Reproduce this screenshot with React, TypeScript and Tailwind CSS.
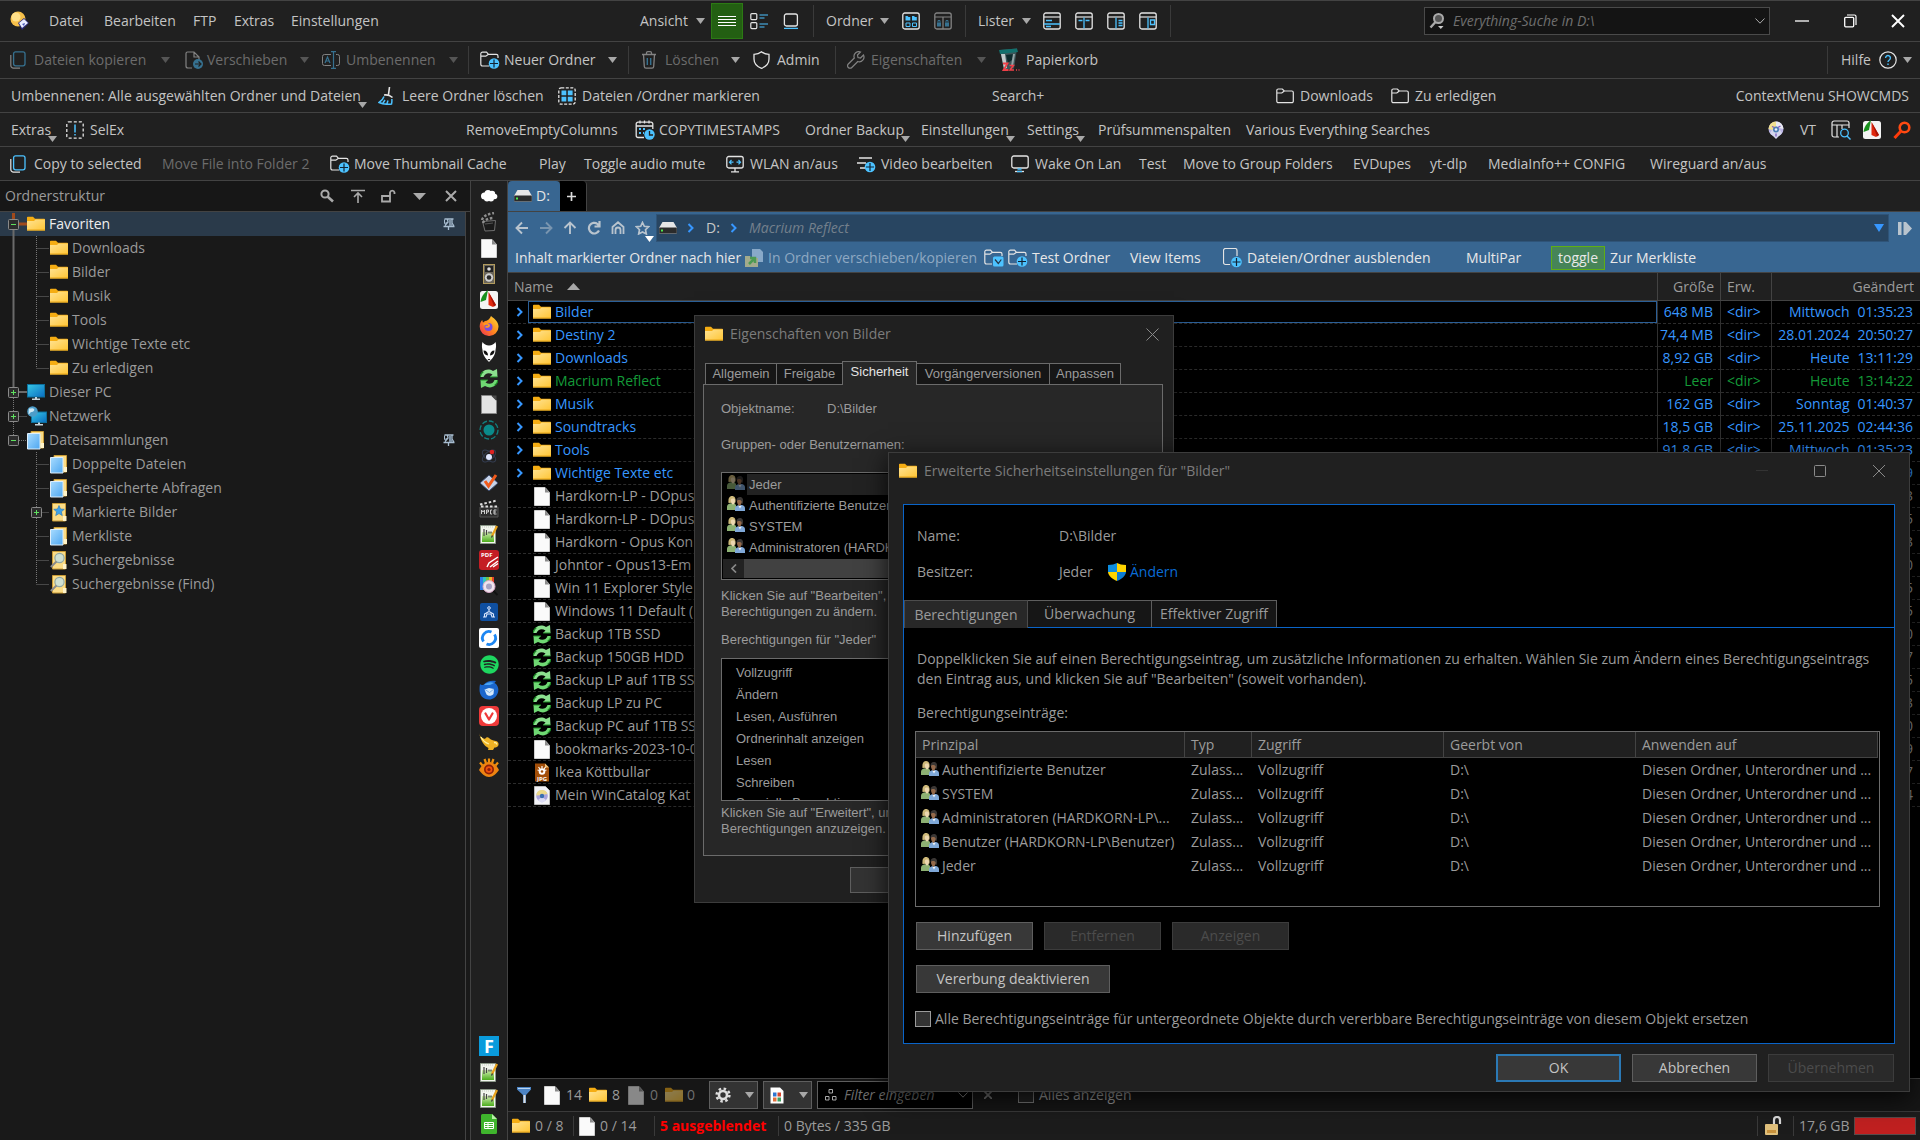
import type { ReactNode } from "react";
import clsx from "clsx";
import { FaSpotify } from "react-icons/fa";
import { SiVivaldi } from "react-icons/si";

const W = "#e4e4e4";
const B = "#4cc2ff";

type IcoProps = { children: ReactNode; w?: number; h?: number; dim?: boolean };

function Ico({ children, w = 18, h = 18, dim }: IcoProps) {
  return (
    <svg
      width={w}
      height={h}
      viewBox={`0 0 ${w} ${h}`}
      fill="none"
      aria-hidden="true"
      className={clsx("shrink-0", dim && "opacity-50")}
    >
      {children}
    </svg>
  );
}

/* ---------- toolbar icons ---------- */

const LogoIcon = () => (
  <Ico w={20} h={20}>
    <circle cx="8" cy="8" r="7.5" fill="#f6c04a" />
    <circle cx="6" cy="6" r="4.5" fill="#ffe08a" />
    <path d="M8 12l6-5 5 5-7 7z" fill="#2a2a7a" />
    <path d="M9 12l5-4 4 4-6 5z" fill="#e8ecff" />
    <path d="M12 13l3-1-1 3z" fill="#4858b8" />
  </Ico>
);

const CopyIcon = ({ dim }: { dim?: boolean }) => (
  <Ico w={16} dim={dim}>
    <path d="M.8 4v10.5a2.6 2.6 0 0 0 2.6 2.6H10" stroke={W} strokeWidth="1.2" />
    <rect x="3.6" y=".8" width="11.4" height="14" rx="2" stroke={B} strokeWidth="1.3" />
  </Ico>
);

const MoveIcon = () => (
  <Ico dim>
    <path d="M1 15V2.5A1.5 1.5 0 0 1 2.5 1H9l5 5v3M9 1v5h5M1 15a2 2 0 0 0 2 2h4" stroke={W} strokeWidth="1.2" />
    <circle cx="13" cy="13" r="5" fill={B} />
    <path d="M10 13h6M13.5 10.5L16 13l-2.5 2.5" stroke="#202020" strokeWidth="1.2" />
  </Ico>
);

const RenameIcon = () => (
  <Ico dim>
    <path d="M9 3.5H2.5a2 2 0 0 0-2 2v7a2 2 0 0 0 2 2H9M14 3.5h1.5a2 2 0 0 1 2 2v7a2 2 0 0 1-2 2H14" stroke={W} />
    <path d="M3 12l2.500-6L8 12M4 10h3M11.500 1v16M9 .7h5M9 17.300h5" stroke={B} strokeWidth="1.2" />
  </Ico>
);

const Plus = ({ x, y }: { x: number; y: number }) => (
  <g transform={`translate(${x} ${y})`}>
    <circle r="5.3" fill={B} />
    <path d="M-4 0h8M0-4v8" stroke="#123" strokeWidth="1.2" />
  </g>
);

const NewFolderIcon = () => (
  <Ico w={20}>
    <path d="M9 15H2.500a1.700 1.700 0 0 1-1.700-1.700V2.800a1.700 1.700 0 0 1 1.700-1.700h4l2 2.200h7.800A1.700 1.700 0 0 1 18 5v2M.8 5.200h5L8.500 3.300" stroke={W} strokeWidth="1.2" />
    <Plus x={14} y={12.5} />
  </Ico>
);

const CheckFolderIcon = () => (
  <Ico w={20}>
    <path d="M8 15H2.500a1.700 1.700 0 0 1-1.700-1.700V2.800a1.700 1.700 0 0 1 1.700-1.700h4l2 2.200h7.800A1.700 1.700 0 0 1 18 5v2M.8 5.200h5L8.500 3.300" stroke={W} strokeWidth="1.2" />
    <rect x="9" y="7.5" width="10.5" height="10" rx="1.5" fill={B} />
    <path d="M11 10.500l3.300 4 3-4" stroke="#234" strokeWidth="1.2" />
  </Ico>
);

const FolderLineIcon = () => (
  <Ico>
    <path d="M.8 3.500a1.500 1.500 0 0 1 1.500-1.500h4l2 2h7.500a1.500 1.500 0 0 1 1.500 1.500v8.700a1.500 1.500 0 0 1-1.500 1.500H2.300a1.500 1.500 0 0 1-1.500-1.500zM.8 6h5l2.500-2" stroke={W} strokeWidth="1.2" />
  </Ico>
);

const TrashIcon = () => (
  <Ico w={16} dim>
    <path d="M1 3.500h14M5.500 3.500V2A1.300 1.300 0 0 1 6.800.7h2.400A1.300 1.300 0 0 1 10.500 2v1.500M2.500 3.500l.8 12a1.700 1.700 0 0 0 1.700 1.600h6a1.700 1.700 0 0 0 1.700-1.600l.8-12" stroke={W} strokeWidth="1.3" />
    <path d="M6.300 7v7M9.700 7v7" stroke={B} strokeWidth="1.4" />
  </Ico>
);

const ShieldIcon = () => (
  <Ico w={17}>
    <path d="M8.500.8C6.500 2.500 4 3.300 1 3.300V8c0 5 3.500 7.800 7.500 9.300C12.500 15.800 16 13 16 8V3.300c-3 0-5.500-.8-7.500-2.500z" stroke={W} strokeWidth="1.3" />
  </Ico>
);

const WrenchIcon = () => (
  <Ico dim>
    <path d="M16.500 4l-3 3-2.500-.5L10.500 4l3-3a4.700 4.700 0 0 0-6.200 6L1.300 13a2.400 2.400 0 0 0 3.500 3.500l6-6a4.700 4.700 0 0 0 5.700-6.500z" stroke={W} strokeWidth="1.2" />
  </Ico>
);

const BinIcon = () => (
  <Ico w={22} h={24}>
    <path d="M2 2l17-1.500-3 20L6 22z" fill="#3d5558" />
    <path d="M1 2l18-1.500 1 3.500L2 6z" fill="#12706d" />
    <path d="M3 6l3 15 3-1-2-14z" fill="#c3cccd" />
    <path d="M8 7l8-1-2 6-4 3z" fill="#0d2a2c" />
    <path d="M15 6h2l-2 12h-2z" fill="#93a3a5" />
    <path d="M5 15.500h4.500L5.500 22h5" stroke="#f04048" strokeWidth="1.800" />
    <path d="M11.500 17.500h4l-3.500 4.500h4M18 22h1M20.500 22h1" stroke="#f04048" strokeWidth="1.500" />
  </Ico>
);

const HelpIcon = () => (
  <Ico>
    <circle cx="9" cy="9" r="8.200" stroke={W} strokeWidth="1.2" />
    <path d="M6.600 7a2.400 2.400 0 1 1 3.700 2c-.9.600-1.300 1-1.300 2M9 12.600v1.500" stroke={B} strokeWidth="1.4" />
  </Ico>
);

const BroomIcon = () => (
  <Ico>
    <path d="M11.500 0l-1 7.500M6 8c3-.5 6 .3 8.500 2.500" stroke={W} strokeWidth="1.6" />
    <path d="M6 9.500c-1 3-2.500 4.500-5 6 4 1.800 9 2 12.500 1.500.5-2 .5-3.500.3-5M5 16l2-3M9 16.500l1-3" stroke={B} strokeWidth="1.5" />
  </Ico>
);

const SelectIcon = () => (
  <Ico>
    <rect x=".8" y=".8" width="16.400" height="16.400" rx="2.500" stroke={W} strokeWidth="1.3" strokeDasharray="3 1.500" />
    <path d="M3.500 3.500h4.800v4.800H3.500zM9.800 3.500h4.800v4.800H9.800zM3.500 9.800h4.800v4.800H3.500zM9.800 9.800h4.800v4.800H9.800z" fill={B} />
  </Ico>
);

const SelExIcon = () => (
  <Ico>
    <rect x=".8" y=".8" width="16.400" height="16.400" rx="2" stroke={W} strokeWidth="1.3" strokeDasharray="3 2" />
    <path d="M9 3.500v8M9 13v1.500" stroke={B} strokeWidth="1.5" />
  </Ico>
);

const CalendarIcon = () => (
  <Ico w={20} h={20}>
    <path d="M9 17.500H3A1.800 1.800 0 0 1 1.200 15.700V4A1.800 1.800 0 0 1 3 2.200h13A1.800 1.800 0 0 1 17.800 4v5M1.200 6h16.600M5 .5v3M9.500.5v3M14 .5v3" stroke={W} strokeWidth="1.3" />
    <path d="M4 9h2M8 9h2M4 13h2M8 13h1" stroke={B} strokeWidth="2" />
    <circle cx="14.500" cy="14.500" r="5.200" fill={B} />
    <path d="M14.500 11v4h3.500" stroke="#202020" strokeWidth="1.3" />
  </Ico>
);

const WlanIcon = () => (
  <Ico>
    <rect x=".8" y="1.500" width="16.400" height="11.500" rx="2" stroke={W} strokeWidth="1.3" />
    <path d="M9 13v3.500M5 16.800h8" stroke={W} strokeWidth="1.3" />
    <path d="M3.500 7.200h4M5.500 5l-2 2.200 2 2.200M14.500 7.200h-4M12.500 5l2 2.200-2 2.200" stroke={B} strokeWidth="1.2" />
  </Ico>
);

const VideoIcon = () => (
  <Ico w={20}>
    <path d="M2 3h13M0 8h9M3 13h5" stroke={W} strokeWidth="1.4" />
    <Plus x={13} y={12} />
  </Ico>
);

const MonitorIcon = () => (
  <Ico>
    <rect x=".8" y="1" width="16.400" height="12" rx="2" stroke={W} strokeWidth="1.3" />
    <path d="M4 16.500h9" stroke={W} strokeWidth="1.3" />
    <path d="M6.500 14h4M6 16.500h5" stroke={B} strokeWidth="1.3" />
  </Ico>
);

const LinesIcon = () => (
  <Ico>
    <path d="M0 4.500h18M0 7.500h18M0 10.500h18M0 13.500h18" stroke="#fff" />
  </Ico>
);

const DetailsIcon = () => (
  <Ico>
    <rect x=".8" y="1.600" width="6" height="6" rx="1" stroke={W} strokeWidth="1.2" />
    <rect x=".8" y="10.600" width="6" height="6" rx="1" stroke={W} strokeWidth="1.2" />
    <path d="M9.500 3H18M9.500 6h5M9.500 12H18M9.500 15h5" stroke={B} strokeWidth="1.2" />
  </Ico>
);

const ThumbIcon = () => (
  <Ico w={16}>
    <rect x="1.400" y="2" width="13" height="12" rx="2" stroke={W} strokeWidth="1.3" />
    <path d="M1 16.400h14" stroke={B} strokeWidth="1.3" />
  </Ico>
);

const FoldersIcon = () => (
  <Ico>
    <rect x=".8" y="1" width="16.400" height="16" rx="2" stroke={W} strokeWidth="1.3" />
    <path d="M3.500 4h2l1 1h1.800v3.500H3.500zM10 4h2l1 1h1.800v3.500H10z" fill={B} />
    <path d="M4 11h4v3.500H4zM10.500 11h4v3.500h-4z" stroke={B} />
  </Ico>
);

const LockFoldersIcon = () => (
  <Ico dim>
    <rect x=".8" y="1" width="16.400" height="16" rx="2" stroke={W} strokeWidth="1.3" />
    <path d="M1 5h16M9 5v12" stroke={W} strokeWidth="1.2" />
    <path d="M3 10.500h4v4H3zM11 10.500h4v4h-4z" fill={B} />
    <path d="M4 10.500V8.500h2v2M12 10.500V8.500h2v2" stroke={B} />
  </Ico>
);

const Frame = ({ blue, white }: { blue: string; white: string }) => (
  <Ico>
    <rect x=".8" y="1" width="16.400" height="16" rx="2" stroke={W} strokeWidth="1.3" />
    <path d={white} stroke={W} strokeWidth="1.2" />
    <path d={blue} stroke={B} strokeWidth="1.3" />
  </Ico>
);

const CatalogIcon = () => (
  <Ico>
    <circle cx="9" cy="8" r="7.500" fill="#b9b3e2" />
    <path d="M1.500 8A7.500 7.500 0 0 1 9 .5V6L5 9z" fill="#f0df8e" />
    <path d="M9 .5A7.500 7.500 0 0 1 16.500 8L12 7 9 5z" fill="#e9e9f2" />
    <path d="M3 12l6 6 6-6-2-3H5z" fill="#d5d6ee" />
    <circle cx="9" cy="8.500" r="3" fill="#4c7fb5" />
    <circle cx="9" cy="8.500" r="1.300" fill="#eef" />
    <path d="M5 5.500l2.500 1M13.500 5L11 6.500M9 12.500v3" stroke="#7d5bc2" strokeWidth="1.300" />
  </Ico>
);

const ColumnsSearchIcon = () => (
  <Ico w={20} h={20}>
    <path d="M8 17H3a2 2 0 0 1-2-2V3a2 2 0 0 1 2-2h13a2 2 0 0 1 2 2v5M1 5h17M6 5v12M11 5v4" stroke={W} strokeWidth="1.2" />
    <circle cx="13.500" cy="13" r="3.800" stroke={B} strokeWidth="1.3" />
    <path d="M16 16l3.500 3.500" stroke={B} strokeWidth="1.4" />
  </Ico>
);

const FastStoneIcon = () => (
  <Ico h={20}>
    <rect y="1" width="18" height="18" rx="2.500" fill="#f4f4f4" />
    <path d="M8 0C4 3 1 7 .5 12L6 10z" fill="#18901c" />
    <path d="M8.500 2L16 15l-3 2-4.500-2z" fill="#e0280e" />
    <path d="M8.500 2L16 15l-2 1.500z" fill="#a81206" />
  </Ico>
);

const RedSearchIcon = () => (
  <Ico>
    <circle cx="11.500" cy="6.500" r="4.800" stroke="#ff4a12" strokeWidth="2.600" />
    <path d="M8 10l-6.500 7" stroke="#ff3a0a" strokeWidth="3" />
  </Ico>
);

const EverythingIcon = () => (
  <Ico>
    <circle cx="9.500" cy="6.500" r="4.500" stroke="#aaa" strokeWidth="2" fill="#555" />
    <path d="M6.500 10L1.500 15.500" stroke="#aaa" strokeWidth="2.400" />
    <path d="M9 14h5.500l-2.700 3z" fill="#ccc" />
  </Ico>
);

/* ---------- file icons ---------- */

const FolderIcon = ({ dim }: { dim?: boolean }) => (
  <Ico h={16} dim={dim}>
    <path d="M0 1.500A.8.8 0 0 1 .8.700H6l2 2h9.200a.8.8 0 0 1 .8.800V14H0z" fill="#f5ad13" />
    <path d="M0 5h7l1.500-1.500H18V14.500H0z" fill="url(#folder)" />
    <path d="M0 14h18" stroke="#e8a516" />
  </Ico>
);

const PageIcon = ({ dim }: { dim?: boolean }) => (
  <Ico w={16} h={19} dim={dim}>
    <path d="M.5.500h10.500l4.500 5v13H.5z" fill="#fafafa" stroke="#cfcfcf" />
    <path d="M11 .5v5h4.500z" fill="#8c8c8c" />
  </Ico>
);

const SyncIcon = () => (
  <Ico h={19}>
    <path d="M0 8C1 2 7-1.500 13 2L17 0l.5 8H10l2.500-2.500C9 3 5 4 3.500 8z" fill="#8be08e" />
    <path d="M18 11c-1 6-7 9.500-13 6L1 19l-.5-8H8l-2.500 2.500C9 16 13 15 14.500 11z" fill="#6fd873" />
    <path d="M0 8c.4-2.400 1.600-4 3.300-5.200M18 11c-.4 2.400-1.600 4-3.300 5.200M10 8h7.500M.5 11H8" stroke="#1c8a25" strokeWidth="1.2" />
  </Ico>
);

const JpgIcon = () => (
  <Ico w={14} h={19}>
    <path d="M0 .5h10l4 4v14H0z" fill="#a24e08" />
    <path d="M10 .5v4h4z" fill="#f0c27a" />
    <circle cx="7" cy="8.500" r="3.300" fill="#fff" />
    <circle cx="7" cy="8.500" r="1.300" fill="#a24e08" />
    <path d="M2.500 7l2 .5M3.500 4l1.500 2M7 3v2.500M10.500 4L9 6M11.500 7l-2 .5" stroke="#fff" strokeWidth="1.2" />
    <text x="7" y="17.500" textAnchor="middle" fontSize="6" fontWeight="bold" fill="#fff">JPG</text>
  </Ico>
);

const CatalogFileIcon = () => (
  <Ico w={16} h={19}>
    <path d="M.5.500h11l4 4v14H.5z" fill="#f2f2f6" stroke="#bbb" />
    <circle cx="8" cy="10" r="5.800" fill="#a9a4dd" />
    <path d="M2.200 9.500A5.800 5.800 0 0 1 13.500 8L8 9z" fill="#ecd98a" />
    <path d="M4 14l4-3 4 3-4 3z" fill="#dcdcf4" />
    <circle cx="8" cy="10" r="2.200" fill="#3a6fb0" />
  </Ico>
);

const PcIcon = () => (
  <Ico h={16}>
    <rect x=".5" y=".5" width="17" height="12.500" fill="url(#screen)" stroke="#0d6f9c" />
    <path d="M8 13h2v1.500h3V16H5v-1.500h3z" fill="#c5d3da" />
  </Ico>
);

const NetworkIcon = () => (
  <Ico h={20} w={20}>
    <rect x="4.500" y="6" width="15" height="10.500" fill="url(#screen)" stroke="#0d6f9c" />
    <path d="M11 16.500h2V18h3v1.500H8V18h3z" fill="#c5d3da" />
    <circle cx="5.500" cy="5.500" r="5.300" fill="#4d9dc9" />
    <path d="M2 2.500c2 0 4-1 5 .5s-1 3-2.500 3S3 8.500 1.500 8z" fill="#cfeaf6" />
  </Ico>
);

const CollectionIcon = () => (
  <Ico h={19}>
    <path d="M4 .5h12.500V17H4z" fill="#fbdc86" stroke="#c99b36" />
    <path d="M14 12h3v5h-3z" fill="#fff3c9" />
    <path d="M.5 2.500h12.500v15.500H.5z" fill="url(#sheet)" stroke="#dfeefa" />
  </Ico>
);

const StarCollectionIcon = () => (
  <Ico h={19}>
    <path d="M2.500.5h13V18h-13z" fill="#fbdc86" stroke="#c99b36" />
    <path d="M9 2.500l1.500 3.500 3.800.3-2.900 2.500.9 3.800L9 10.600l-3.300 2 .9-3.800-2.900-2.500 3.800-.3z" fill="#3fa2e8" stroke="#2673b4" strokeWidth=".6" />
    <path d="M13 13h3.500v5H13z" fill="#fff3c9" />
  </Ico>
);

const SearchCollectionIcon = () => (
  <Ico h={19}>
    <path d="M2.500.5h13V18h-13z" fill="#fbdc86" stroke="#c99b36" />
    <circle cx="9.500" cy="7" r="4.600" fill="#cfe0d2" stroke="#8fa8a6" strokeWidth="1.2" />
    <path d="M6.500 10.500L.8 16" stroke="#8a8a8a" strokeWidth="2" />
    <path d="M13 13h3.500v5H13z" fill="#fff3c9" />
  </Ico>
);

const UsersIcon = ({ dim }: { dim?: boolean }) => (
  <span className="shrink-0 pb-1">
    <Ico h={15} dim={dim}>
      <path d="M0 14V11c0-2 1-3 3-3.500l4-.5 2 2v5z" fill="#8db173" />
      <path d="M1.500 7C1 2 2.500 0 5 0s4 2 3.500 6.500z" fill="#cdb878" />
      <path d="M4 3.500C4.500 2 8 2 8 4.500S7 8.500 6 8.500 3.500 6 4 3.500z" fill="#ecd7b0" />
      <path d="M8 15v-2.500c0-2 1.500-3 4-3.500h3c2 .5 3 1.500 3 3.500V15z" fill="#7fa8d8" />
      <path d="M9.500 5C9.500 2 11 1 13 1s3.500 1.500 3 5l-.5 2z" fill="#3b3735" />
      <path d="M10 5c0-1.500 4-1.500 4.500 0S13.500 10 12.500 10 10 7 10 5z" fill="#94694a" />
      <path d="M11.500 10l1.500 2.500L14.500 10z" fill="#eef3fa" />
    </Ico>
  </span>
);

const PinIcon = () => (
  <Ico w={12} h={12}>
    <path d="M1.500 1h9M4.500 1.500L5 4 2 7.500M9 1.500V5l2 3M.5 8.500h11M5.500 9v3" stroke="#a8bdd0" strokeWidth="1.300" />
    <path d="M6 2h2.500v3L10 8H6z" fill="#7f93a6" />
    <path d="M1.500 1.500v4l3-1" stroke="#a8bdd0" />
  </Ico>
);

const DriveIcon = () => (
  <Ico h={12}>
    <path d="M3.500 0h11L18 6H0z" fill="#e6e6e6" />
    <rect y="5.500" width="18" height="6" rx="1" fill="#2b2b2b" stroke="#8a8a8a" strokeWidth=".6" />
    <rect x="2" y="7.500" width="2" height="2" fill="#4dea4d" />
  </Ico>
);

/* ---------- launcher icons ---------- */

const NotesIcon = () => (
  <Ico h={20}>
    <path d="M.5 1.500h15v18H.5z" fill="#f2f6ee" stroke="#8d9a8a" />
    <path d="M2 8h12v10H2z" fill="url(#grass)" />
    <path d="M2 3h12" stroke="#c9cfc6" strokeDasharray="1 1" />
    <path d="M4 5v7M6.500 6v5M9 7.500v2M11 7.500v2" stroke="#444" strokeWidth="1.2" />
    <path d="M17 2l-5 10" stroke="#e8a21c" strokeWidth="2.200" />
    <path d="M12.500 11.500l-1 2" stroke="#333" strokeWidth="1.300" />
  </Ico>
);

const launchers: { name: string; icon: ReactNode }[] = [
  {
    name: "Cloud",
    icon: (
      <Ico>
        <g fill="#fff">
          <circle cx="4.500" cy="9" r="3.500" />
          <circle cx="8" cy="6.500" r="3.500" />
          <circle cx="12" cy="7" r="3.200" />
          <circle cx="14.500" cy="9.500" r="2.800" />
          <circle cx="11" cy="11.500" r="3" />
          <circle cx="7" cy="11.500" r="3" />
        </g>
      </Ico>
    ),
  },
  {
    name: "Clapper",
    icon: (
      <Ico h={20}>
        <path d="M2.500 9.500l13-1-1 10L5 19z" fill="#1a1a1a" stroke="#6f6f6f" />
        <path d="M2 8C3 4 8 2 14 1M3 11c1-3 6-5 11-5" stroke="#8f8f8f" strokeWidth="2.400" strokeDasharray="2.500 1.800" />
        <path d="M5 12l8-1" stroke="#555" />
      </Ico>
    ),
  },
  { name: "Dokument", icon: <PageIcon /> },
  {
    name: "Lautsprecher",
    icon: (
      <Ico w={12} h={20}>
        <rect x=".5" y=".5" width="11" height="19" fill="#6a655a" stroke="#b39c5e" />
        <rect x="2" y="2" width="8" height="6" fill="#222" />
        <circle cx="6" cy="5" r="1.800" fill="#ddd" />
        <circle cx="6" cy="13.500" r="4.200" fill="#cfcfcf" />
        <circle cx="6" cy="13.500" r="2.300" fill="#2b2b2b" />
      </Ico>
    ),
  },
  { name: "FastStone", icon: <FastStoneIcon /> },
  {
    name: "Firefox",
    icon: (
      <Ico h={20} w={20}>
        <path d="M10 20a9.200 9.200 0 0 1-9.300-9.500c0-3 1-5 2.500-6.500L4 6.500l2-1.500C8 5 11 3 12 0c4 3 7.500 6 7.500 10.500A9.300 9.300 0 0 1 10 20z" fill="url(#fox)" />
        <circle cx="9.500" cy="11" r="4" fill="#7a4be0" />
        <path d="M4.500 8.500c3-1.500 5.500-.5 5.500 1S8 11 6.500 10.500" stroke="#ff9a1e" strokeWidth="2" />
      </Ico>
    ),
  },
  {
    name: "foobar2000",
    icon: (
      <Ico w={16} h={20}>
        <path d="M1.500 0C3 2 5 3.500 8 3.500S13 2 14.500 0c1 3 .5 6 0 8 0 5-3.500 9-6.500 12-3-3-6.500-7-6.500-12C1 6 .5 3 1.500 0z" fill="#fff" />
        <path d="M2.500 8.500c3 0 4.500 2 4.500 5-3-.5-4.500-2-4.500-5zM13.500 8.500c-3 0-4.500 2-4.500 5 3-.5 4.500-2 4.500-5zM6.500 17h3L8 18.500z" fill="#111" />
      </Ico>
    ),
  },
  { name: "Backup", icon: <SyncIcon /> },
  {
    name: "LibreOffice",
    icon: (
      <Ico w={16} h={19}>
        <path d="M.5.500h10l5 5v13H.5z" fill="#e3e3e3" stroke="#888" />
        <path d="M10 .5h5.500V6z" fill="#4a4a4a" />
      </Ico>
    ),
  },
  {
    name: "Aufnahme",
    icon: (
      <Ico w={20} h={20}>
        <circle cx="10" cy="10" r="9" stroke="#128080" strokeWidth="1.300" strokeDasharray="5 2" />
        <circle cx="10" cy="10" r="5.500" fill="#0a8a8a" />
      </Ico>
    ),
  },
  {
    name: "Atom",
    icon: (
      <Ico>
        <ellipse cx="9" cy="9" rx="8" ry="4" stroke="#333c50" transform="rotate(40 9 9)" />
        <ellipse cx="9" cy="9" rx="8" ry="4" stroke="#333c50" transform="rotate(-40 9 9)" />
        <circle cx="9" cy="10" r="3" fill="#dfe6ff" />
        <circle cx="12" cy="5" r="2.300" fill="#d22" />
      </Ico>
    ),
  },
  {
    name: "Haken",
    icon: (
      <Ico w={20}>
        <path d="M10 2l9 8-9 8-9-8z" fill="#c7d3e8" stroke="#3d4b6b" />
        <path d="M6 8l3.500 5L17 2" stroke="#f05a1c" strokeWidth="3" />
      </Ico>
    ),
  },
  {
    name: "MPC-BE",
    icon: (
      <Ico w={20} h={19}>
        <path d="M1 8h18v10H1z" fill="#2e2e2e" stroke="#555" />
        <path d="M1 5.500L18 1.500M2 7.500h17" stroke="#ddd" strokeWidth="2" strokeDasharray="2.500 2" />
        <path d="M2.500 15v-4l1.500 2 1.500-2v4M7.500 15v-4h2v2h-2M13 11h-1.500v4H13M15 11v4h2.500M15 11h2.500M15 13h2" stroke="#ccc" />
      </Ico>
    ),
  },
  { name: "Notizen", icon: <NotesIcon /> },
  {
    name: "PDF",
    icon: (
      <Ico w={20} h={20}>
        <rect width="20" height="20" rx="3" fill="#c41d24" />
        <text x="2" y="7" fontSize="6" fontWeight="bold" fill="#fff">PDF</text>
        <path d="M8 17l2-4 9-6M11 17l8-6M14 17l5-3.500" stroke="#fff" strokeWidth="1.500" />
      </Ico>
    ),
  },
  {
    name: "Farbsuche",
    icon: (
      <Ico w={20} h={20}>
        <path d="M1 1h4v13H1z" fill="#2e7be8" />
        <path d="M4 1h4v13H4z" fill="#2ec2c0" />
        <path d="M7 1h4v9H7z" fill="#6cc24c" />
        <path d="M10 1h3v9h-3z" fill="#f1b52a" />
        <path d="M13 1h2v8h-2z" fill="#e5422b" />
        <circle cx="10" cy="10.500" r="6" fill="#f0e4ee" stroke="#d9a9c8" />
        <circle cx="10" cy="10.500" r="3" fill="#a8a3c4" />
        <path d="M14.500 15l4 4" stroke="#111" strokeWidth="2" />
      </Ico>
    ),
  },
  {
    name: "Werkzeug",
    icon: (
      <Ico>
        <rect width="18" height="18" rx="2" fill="#0f4fa0" />
        <circle cx="9" cy="5" r="1.300" stroke="#dbe8ff" />
        <path d="M9 6.500v2M3 14h3l1-3h4l1 3h3M4.500 14V11L9 8.500l4.500 2.500v3" stroke="#dbe8ff" strokeWidth="1.100" />
      </Ico>
    ),
  },
  {
    name: "RustDesk",
    icon: (
      <Ico w={20} h={20}>
        <rect width="20" height="20" rx="2" fill="#fff" />
        <path d="M4.500 13.500A6.500 6.500 0 0 1 12.500 4M15.500 6.500A6.500 6.500 0 0 1 7.500 16" stroke="#1c86f2" strokeWidth="2.800" />
      </Ico>
    ),
  },
  { name: "Spotify", icon: <FaSpotify size={19} color="#1ed760" /> },
  {
    name: "Thunderbird",
    icon: (
      <Ico w={20} h={20}>
        <path d="M1 4c1 1 2 1.500 4 .5C7 1.500 12 0 17 1l-1.500 2C19 5 20 9 19 12.500 17.500 17 14 19.500 10 19.500 4 19.500.5 15 .5 10 .5 8 .5 6 1 4z" fill="#1a66cc" />
        <path d="M5 5c3-3 7-3.500 10-2l-4 2z" fill="#49a4f4" />
        <path d="M5.500 9.500L10 8l5 1-.5 5c-1.500 2-5 2.500-7 .5z" fill="#d6e9fb" />
        <path d="M6 9.500l4.500 3L15 9" stroke="#7cb4ea" />
      </Ico>
    ),
  },
  {
    name: "Vivaldi",
    icon: (
      <span className="relative flex size-5 items-center justify-center rounded bg-[#ef3939]">
        <span className="flex size-4 items-center justify-center rounded-full bg-white">
          <Ico w={10} h={10}><path d="M1.500 2.500L5 8.500l3.500-6" stroke="#ef3939" strokeWidth="2.200" strokeLinecap="round" strokeLinejoin="round" /></Ico>
        </span>
      </span>
    ),
  },
  {
    name: "Genie",
    icon: (
      <Ico w={20}>
        <path d="M0 0c1 4 3 5 6 6 1-2 3-2.500 4-1 1 1 2.500 2 4.500 2.500C18 8 20 9 19.500 12c-.5 2-2.500 2.500-4 2.500L14 17H9l.5-2C5 13 2 8 0 0z" fill="#efb224" />
        <path d="M2 4c2 4 5 6 8 7M15 9.500c2 0 3 .5 2.500 2" stroke="#fff0a0" strokeWidth="1.300" />
      </Ico>
    ),
  },
  {
    name: "XnView",
    icon: (
      <Ico w={20} h={20}>
        <path d="M3.500 7.500L1 4.500M7 5L5.500 1M10 4V.5M13 5l1.500-4M16.500 7.500L19 4.500" stroke="#f0900c" strokeWidth="2.200" />
        <path d="M0 12c3-6 7-8 10-8s7 2 10 8c-3 4-6 7-10 7s-7-3-10-7z" fill="#ee8411" />
        <circle cx="10" cy="11.500" r="5" fill="#8e1f08" />
        <circle cx="10" cy="11.500" r="3.300" fill="#f0500c" />
        <circle cx="10" cy="11.500" r="1.600" fill="#8e1f08" />
      </Ico>
    ),
  },
];

const bottomLaunchers: { name: string; icon: ReactNode }[] = [
  {
    name: "Freefilesync",
    icon: (
      <span className="flex size-5 items-center justify-center bg-[#0a9bdc] text-lg leading-5 font-bold text-white">F</span>
    ),
  },
  { name: "Notizen 1", icon: <NotesIcon /> },
  { name: "Notizen 2", icon: <NotesIcon /> },
  {
    name: "Calc",
    icon: (
      <Ico w={16} h={20}>
        <path d="M0 1.500A1.500 1.500 0 0 1 1.500 0H11l5 5v13.500a1.500 1.500 0 0 1-1.500 1.500h-13A1.500 1.500 0 0 1 0 18.500z" fill="#3fb52d" />
        <path d="M11 0l5 5h-5z" fill="#b9f0a8" />
        <path d="M3.500 8.500h9v6h-9zM3.500 10.500h9M3.500 12.500h9M7 8.500v6" stroke="#fff" />
      </Ico>
    ),
  },
];

/* ---------- shared controls ---------- */

function Tri({ dim, className }: { dim?: boolean; className?: string }) {
  return (
    <svg width="9" height="6" viewBox="0 0 9 6" className={clsx("shrink-0", className)} aria-hidden="true">
      <path d="M0 0h9L4.500 6z" fill={dim ? "#555" : "#a8a8a8"} />
    </svg>
  );
}

function Sep({ w = "w-3" }: { w?: string }) {
  return (
    <span className={clsx("flex shrink-0 justify-center self-stretch py-1", w)}>
      <span className="w-px bg-[#3a3a3a]" />
    </span>
  );
}

type ToolProps = { label: string; w: string; icon?: ReactNode; iconW?: string; dim?: boolean; corner?: boolean };

function Tool({ label, w, icon, iconW = "w-6", dim, corner }: ToolProps) {
  return (
    <button type="button" disabled={dim} className={clsx("flex shrink-0 items-center self-stretch text-left", w, dim && "text-[#6c6c6c]")}>
      {icon && <span className={clsx("flex shrink-0 items-center", iconW)}>{icon}</span>}
      <span className="relative">
        {label}
        {corner && <Tri className="absolute -right-1.5 -bottom-0.5" />}
      </span>
    </button>
  );
}

function IconBtn({ label, w, children, active }: { label: string; w: string; children: ReactNode; active?: boolean }) {
  return (
    <button
      type="button"
      aria-label={label}
      className={clsx("flex shrink-0 items-center justify-center", w, active && "h-9 border border-[#2c7a14] bg-[#235f12]")}
    >
      {children}
    </button>
  );
}

/* ---------- top bars ---------- */

function TopBars() {
  const row = "flex items-center overflow-hidden border-b border-[#434343]";
  return (
    <header className="border-t border-[#434343] bg-[#202020] whitespace-nowrap text-[#c4c4c4]">
      <div className={clsx(row, "h-[41px] pl-[10px]")}>
        <span className="w-[39px] shrink-0">
          <LogoIcon />
        </span>
        <Tool label="Datei" w="w-[55px]" />
        <Tool label="Bearbeiten" w="w-[89px]" />
        <Tool label="FTP" w="w-[41px]" />
        <Tool label="Extras" w="w-[57px]" />
        <Tool label="Einstellungen" w="w-[349px]" />
        <Tool label="Ansicht" w="w-[52px]" />
        <IconBtn label="Ansicht-Menü" w="w-[19px]"><span className="w-3"><Tri /></span></IconBtn>
        <IconBtn label="Liste" w="w-8" active><LinesIcon /></IconBtn>
        <IconBtn label="Details" w="w-8"><DetailsIcon /></IconBtn>
        <IconBtn label="Miniaturen" w="w-[32px]"><ThumbIcon /></IconBtn>
        <Sep />
        <span className="w-[7px] shrink-0" />
        <Tool label="Ordner" w="w-12" />
        <IconBtn label="Ordner-Menü" w="w-5"><Tri /></IconBtn>
        <IconBtn label="Ordnerformat" w="w-[33px]"><FoldersIcon /></IconBtn>
        <IconBtn label="Format sperren" w="w-8"><LockFoldersIcon /></IconBtn>
        <Sep />
        <span className="w-[7px] shrink-0" />
        <Tool label="Lister" w="w-[38px]" />
        <IconBtn label="Lister-Menü" w="w-5"><Tri /></IconBtn>
        <IconBtn label="Horizontal teilen" w="w-8"><Frame white="M1 5h16" blue="M3 8.500h6M1 12h16M3 14.500h5" /></IconBtn>
        <IconBtn label="Vertikal teilen" w="w-8"><Frame white="M1 5h16" blue="M9 5.500V16.500M3.500 8.500h4M10.500 8.500h4" /></IconBtn>
        <IconBtn label="Baum" w="w-8"><Frame white="M1 5h16" blue="M9 5.500v11M11.500 8.500h4M11.500 11h4M11.500 13.500h4" /></IconBtn>
        <IconBtn label="Vorschau" w="w-8"><Frame white="M1 5h16" blue="M9 5.500v11M11.500 8h4v4.500h-4z" /></IconBtn>
        <Sep />
        <div className="ml-auto flex h-7 w-[346px] shrink-0 items-center border border-[#4a4a4a] bg-[#141414] pr-1 pl-[4px]">
          <EverythingIcon />
          <input
            type="text"
            aria-label="Everything-Suche"
            placeholder="Everything-Suche in D:\"
            className="ml-[6px] min-w-0 flex-1 bg-transparent italic outline-none placeholder:text-[#6f6f6f]"
          />
          <Ico w={10} h={6}><path d="M.5.500L5 5.200 9.500.5" stroke="#aaa" /></Ico>
        </div>
        <div className="ml-2 -mr-0.5 flex shrink-0">
          <IconBtn label="Minimieren" w="w-12"><Ico w={14} h={14}><path d="M0 7h14" stroke="#fff" strokeWidth="1.3" /></Ico></IconBtn>
          <IconBtn label="Wiederherstellen" w="w-12"><Ico w={13} h={14}><rect x=".7" y="3.300" width="9" height="9.500" rx="1" stroke="#fff" strokeWidth="1.3" /><path d="M3 1h7.500A1.500 1.500 0 0 1 12 2.500V11" stroke="#fff" strokeWidth="1.2" /></Ico></IconBtn>
          <IconBtn label="Schließen" w="w-12"><Ico w={14} h={14}><path d="M1 1l12 12M13 1L1 13" stroke="#fff" strokeWidth="1.900" /></Ico></IconBtn>
        </div>
      </div>

      <div className={clsx(row, "h-[37px] pl-[10px]")}>
        <Tool label="Dateien kopieren" w="w-[146px]" dim icon={<CopyIcon dim />} />
        <IconBtn label="Kopieren-Menü" w="w-[29px]"><span className="w-5"><Tri dim /></span></IconBtn>
        <Tool label="Verschieben" w="w-[112px]" dim icon={<MoveIcon />} iconW="w-[22px]" />
        <IconBtn label="Verschieben-Menü" w="w-[25px]"><span className="w-5"><Tri dim /></span></IconBtn>
        <Tool label="Umbenennen" w="w-[122px]" dim icon={<RenameIcon />} />
        <IconBtn label="Umbenennen-Menü" w="w-[18px]"><Tri dim /></IconBtn>
        <Sep />
        <span className="w-[6px] shrink-0" />
        <Tool label="Neuer Ordner" w="w-[122px]" icon={<NewFolderIcon />} />
        <IconBtn label="Neu-Menü" w="w-5"><Tri /></IconBtn>
        <Sep />
        <span className="w-[7px] shrink-0" />
        <Tool label="Löschen" w="w-[84px]" dim icon={<TrashIcon />} />
        <IconBtn label="Löschen-Menü" w="w-5"><Tri /></IconBtn>
        <span className="w-[8px] shrink-0" />
        <Tool label="Admin" w="w-[76px]" icon={<ShieldIcon />} />
        <Sep />
        <span className="w-[6px] shrink-0" />
        <Tool label="Eigenschaften" w="w-[124px]" dim icon={<WrenchIcon />} />
        <IconBtn label="Eigenschaften-Menü" w="w-5"><Tri dim /></IconBtn>
        <span className="w-[7px] shrink-0" />
        <Tool label="Papierkorb" w="w-[110px]" icon={<BinIcon />} iconW="w-7" />
        <div className="ml-auto flex shrink-0 items-center self-stretch pr-2">
          <Sep />
          <span className="w-2" />
          <span className="w-[38px]">Hilfe</span>
          <button type="button" aria-label="Hilfe" className="w-6"><HelpIcon /></button>
          <Tri />
        </div>
      </div>

      <div className={clsx(row, "h-[34px] pl-[11px]")}>
        <Tool label="Umbennenen: Alle ausgewählten Ordner und Dateien" w="w-[367px]" corner />
        <Tool label="Leere Ordner löschen" w="w-[180px]" icon={<BroomIcon />} />
        <Tool label="Dateien /Ordner markieren" w="w-[434px]" icon={<SelectIcon />} />
        <Tool label="Search+" w="w-[284px]" />
        <Tool label="Downloads" w="w-[115px]" icon={<FolderLineIcon />} />
        <Tool label="Zu erledigen" w="w-[130px]" icon={<FolderLineIcon />} />
        <span className="ml-auto pr-[11px]">ContextMenu SHOWCMDS</span>
      </div>

      <div className={clsx(row, "h-[34px] pl-[11px]")}>
        <Tool label="Extras" w="w-[55px]" corner />
        <Tool label="SelEx" w="w-[400px]" icon={<SelExIcon />} />
        <Tool label="RemoveEmptyColumns" w="w-[169px]" />
        <Tool label="COPYTIMESTAMPS" w="w-[170px]" icon={<CalendarIcon />} />
        <Tool label="Ordner Backup" w="w-[116px]" corner />
        <Tool label="Einstellungen" w="w-[106px]" corner />
        <Tool label="Settings" w="w-[71px]" corner />
        <Tool label="Prüfsummenspalten" w="w-[148px]" />
        <Tool label="Various Everything Searches" w="w-[200px]" />
        <div className="ml-auto flex shrink-0 items-center pr-2">
          <IconBtn label="WinCatalog" w="w-[32px]"><CatalogIcon /></IconBtn>
          <Tool label="VT" w="w-[28px] pl-2" />
          <IconBtn label="Spaltensuche" w="w-[42px]"><ColumnsSearchIcon /></IconBtn>
          <IconBtn label="FastStone" w="w-[20px]"><FastStoneIcon /></IconBtn>
          <span className="w-[10px]" />
          <IconBtn label="Suche" w="w-[20px]"><RedSearchIcon /></IconBtn>
        </div>
      </div>

      <div className="flex h-[33px] items-center overflow-hidden pl-[10px]">
        <Tool label="Copy to selected" w="w-[152px]" icon={<CopyIcon />} />
        <Tool label="Move File into Folder 2" w="w-[168px]" dim />
        <Tool label="Move Thumbnail Cache" w="w-[209px]" icon={<NewFolderIcon />} />
        <Tool label="Play" w="w-[45px]" />
        <Tool label="Toggle audio mute" w="w-[142px]" />
        <Tool label="WLAN an/aus" w="w-[131px]" icon={<WlanIcon />} />
        <Tool label="Video bearbeiten" w="w-[154px]" icon={<VideoIcon />} />
        <Tool label="Wake On Lan" w="w-[128px]" icon={<MonitorIcon />} />
        <Tool label="Test" w="w-[44px]" />
        <Tool label="Move to Group Folders" w="w-[170px]" />
        <Tool label="EVDupes" w="w-[77px]" />
        <Tool label="yt-dlp" w="w-[58px]" />
        <Tool label="MediaInfo++ CONFIG" w="w-[162px]" />
        <Tool label="Wireguard an/aus" w="w-[130px]" />
      </div>
    </header>
  );
}

/* ---------- folder tree ---------- */

type Node = { label: string; icon: ReactNode; child?: boolean; last?: boolean; box?: "+" | "-"; pin?: boolean };

const tree: Node[] = [
  { label: "Favoriten", icon: <FolderIcon />, box: "-", pin: true },
  { label: "Downloads", icon: <FolderIcon />, child: true },
  { label: "Bilder", icon: <FolderIcon />, child: true },
  { label: "Musik", icon: <FolderIcon />, child: true },
  { label: "Tools", icon: <FolderIcon />, child: true },
  { label: "Wichtige Texte etc", icon: <FolderIcon />, child: true },
  { label: "Zu erledigen", icon: <FolderIcon />, child: true, last: true },
  { label: "Dieser PC", icon: <PcIcon />, box: "+" },
  { label: "Netzwerk", icon: <NetworkIcon />, box: "+" },
  { label: "Dateisammlungen", icon: <CollectionIcon />, box: "-", pin: true },
  { label: "Doppelte Dateien", icon: <CollectionIcon />, child: true },
  { label: "Gespeicherte Abfragen", icon: <CollectionIcon />, child: true },
  { label: "Markierte Bilder", icon: <StarCollectionIcon />, child: true, box: "+" },
  { label: "Merkliste", icon: <CollectionIcon />, child: true },
  { label: "Suchergebnisse", icon: <SearchCollectionIcon />, child: true },
  { label: "Suchergebnisse (Find)", icon: <SearchCollectionIcon />, child: true, last: true },
];

function Guide({ node, index }: { node: Node; index: number }) {
  const x = node.child ? 36.5 : 13.5;
  const w = node.child ? 50 : 27;
  return (
    <svg width={w} height="24" viewBox={`0 0 ${w} 24`} fill="none" className="shrink-0" aria-hidden="true">
      {/* trunk of the top level: solid down to "Dieser PC", dotted after it */}
      {index > 0 && index < 7 && <path d="M13.500 0V24" stroke="#6a6a6a" strokeWidth="2" />}
      {index === 0 && <path d="M13.500 12V24" stroke="#6a6a6a" strokeWidth="2" />}
      {index === 0 && <path d="M13.500 1V12H27" stroke="#a04a1c" strokeWidth="3" />}
      {index === 7 && <path d="M13.500 0V12H27" stroke="#6a6a6a" strokeWidth="2" />}
      {index === 7 && <path d="M13.500 12V24" stroke="#777" strokeDasharray="1 1" />}
      {index === 8 && <path d="M13.500 0V24M13.500 12.500H27" stroke="#777" strokeDasharray="1 1" />}
      {index === 9 && <path d="M13.500 0V12.500H27" stroke="#777" strokeDasharray="1 1" />}
      {node.child && <path d={`M36.500 0V${node.last ? 12 : 24}M36.500 12.500H49`} stroke="#777" strokeDasharray="1 1" />}
      {node.box && (
        <>
          <rect x={x - 5} y="7.500" width="10" height="10" rx="1" fill="#2c2c2c" stroke="#8a8a8a" />
          <path d={`M${x - 2.5} 12.500h5${node.box === "+" ? `M${x} 10v5` : ""}`} stroke="#5fe05f" />
        </>
      )}
    </svg>
  );
}

function TreePanel() {
  return (
    <aside className="flex w-[471px] shrink-0 flex-col border-t border-r border-[#434343] bg-[#191919] text-[#9b9b9b]">
      <div className="flex h-[31px] items-center border-b border-[#434343] bg-[#171717] pr-1 pl-[5px]">
        <h2 className="flex-1">Ordnerstruktur</h2>
        <IconBtn label="Suchen" w="w-[31px]"><Ico w={14} h={14}><circle cx="5" cy="5" r="3.600" stroke="#aaa" strokeWidth="2" /><path d="M7.500 7.500l5.500 5" stroke="#aaa" strokeWidth="2.600" /></Ico></IconBtn>
        <IconBtn label="Nach oben" w="w-[31px]"><Ico w={14} h={14}><path d="M0 1.500h14M7 14V4M3 8l4-4 4 4" stroke="#aaa" strokeWidth="1.6" /></Ico></IconBtn>
        <IconBtn label="Sperren" w="w-[31px]"><Ico w={15} h={14}><path d="M1 7h8v5.500H1zM9 7V3.500A2.300 2.300 0 0 1 13.500 3.500V5" stroke="#aaa" strokeWidth="1.800" /></Ico></IconBtn>
        <IconBtn label="Menü" w="w-[31px]"><Ico w={13} h={7}><path d="M0 0h13L6.500 7z" fill="#aaa" /></Ico></IconBtn>
        <IconBtn label="Schließen" w="w-[31px]"><Ico w={12} h={12}><path d="M1 1l10 10M11 1L1 11" stroke="#aaa" strokeWidth="2" /></Ico></IconBtn>
      </div>
      <ul className="mr-1 flex-1 border-r border-[#434343]">
        {tree.map((node, i) => (
          <li key={node.label} className={clsx("flex h-6 items-center", i === 0 && "bg-[#2a3a4a] text-[#eee]")}>
            <Guide node={node} index={i} />
            <span className="flex w-[22px] shrink-0 items-center">{node.icon}</span>
            <span className="flex-1 whitespace-nowrap">{node.label}</span>
            {node.pin && <span className="mr-[10px]"><PinIcon /></span>}
          </li>
        ))}
      </ul>
    </aside>
  );
}

function LauncherBar() {
  return (
    <nav className="flex w-[36px] shrink-0 flex-col border-t border-[#434343] bg-[#202020] pt-[2px] pb-[3px]">
      {launchers.map((l) => (
        <button key={l.name} type="button" aria-label={l.name} className="flex h-[26px] items-center justify-center">
          {l.icon}
        </button>
      ))}
      <span className="flex-1" />
      {bottomLaunchers.map((l) => (
        <button key={l.name} type="button" aria-label={l.name} className="flex h-[26px] items-center justify-center">
          {l.icon}
        </button>
      ))}
    </nav>
  );
}

/* ---------- lister ---------- */

type FileRow = { name: string; icon: ReactNode; kind: "dir" | "empty" | "file"; size?: string; day?: string; time: string };

const files: FileRow[] = [
  { name: "Bilder", icon: <FolderIcon />, kind: "dir", size: "648 MB", day: "Mittwoch", time: "01:35:23" },
  { name: "Destiny 2", icon: <FolderIcon />, kind: "dir", size: "74,4 MB", day: "28.01.2024", time: "20:50:27" },
  { name: "Downloads", icon: <FolderIcon />, kind: "dir", size: "8,92 GB", day: "Heute", time: "13:11:29" },
  { name: "Macrium Reflect", icon: <FolderIcon />, kind: "empty", size: "Leer", day: "Heute", time: "13:14:22" },
  { name: "Musik", icon: <FolderIcon />, kind: "dir", size: "162 GB", day: "Sonntag", time: "01:40:37" },
  { name: "Soundtracks", icon: <FolderIcon />, kind: "dir", size: "18,5 GB", day: "25.11.2025", time: "02:44:36" },
  { name: "Tools", icon: <FolderIcon />, kind: "dir", size: "91,8 GB", day: "Mittwoch", time: "01:35:23" },
  { name: "Wichtige Texte etc", icon: <FolderIcon />, kind: "dir", time: "9" },
  { name: "Hardkorn-LP - DOpus", icon: <PageIcon />, kind: "file", time: "3" },
  { name: "Hardkorn-LP - DOpus", icon: <PageIcon />, kind: "file", time: "5" },
  { name: "Hardkorn - Opus Kon", icon: <PageIcon />, kind: "file", time: "3" },
  { name: "Johntor - Opus13-Em", icon: <PageIcon />, kind: "file", time: "0" },
  { name: "Win 11 Explorer Style", icon: <PageIcon />, kind: "file", time: "5" },
  { name: "Windows 11 Default (", icon: <PageIcon />, kind: "file", time: "5" },
  { name: "Backup 1TB SSD", icon: <SyncIcon />, kind: "file", time: "0" },
  { name: "Backup 150GB HDD", icon: <SyncIcon />, kind: "file", time: "7" },
  { name: "Backup LP auf 1TB SS", icon: <SyncIcon />, kind: "file", time: "5" },
  { name: "Backup LP zu PC", icon: <SyncIcon />, kind: "file", time: "3" },
  { name: "Backup PC auf 1TB SS", icon: <SyncIcon />, kind: "file", time: "0" },
  { name: "bookmarks-2023-10-0", icon: <PageIcon />, kind: "file", time: "9" },
  { name: "Ikea Köttbullar", icon: <JpgIcon />, kind: "file", time: "7" },
  { name: "Mein WinCatalog Kat", icon: <CatalogFileIcon />, kind: "file", time: "4" },
];

const rowColor = {
  dir: "text-[#3797ff]",
  empty: "text-[#149a38]",
  file: "text-[#9d9d9d]",
};

function Chevron() {
  return (
    <Ico w={8} h={10}>
      <path d="M1.500 1L5.500 5l-4 4" stroke="#3797ff" strokeWidth="2" />
    </Ico>
  );
}

function FileTable() {
  const cell = "h-[23px] border-r border-b border-[#303030] border-b-[#2c2c2c] p-0 [border-bottom-style:dashed]";
  const head = "h-7 border-r border-b border-[#434343] p-0 font-normal";
  return (
    <table className="w-full table-fixed border-separate border-spacing-0 whitespace-nowrap">
      <colgroup>
        <col />
        <col className="w-[63px]" />
        <col className="w-[51px]" />
        <col className="w-[148px]" />
      </colgroup>
      <thead className="bg-[#202020] text-[#9b9b9b]">
        <tr>
          <th className={clsx(head, "pl-[6px] text-left")}>
            <span className="flex items-center gap-3.5">
              Name
              <Ico w={13} h={7}><path d="M0 7h13L6.500 0z" fill="#a8a8a8" /></Ico>
            </span>
          </th>
          <th className={clsx(head, "pr-1.5 text-right")}>Größe</th>
          <th className={clsx(head, "pl-[6px] text-left")}>Erw.</th>
          <th className="h-7 border-b border-[#434343] p-0 pr-1.5 text-right font-normal">Geändert</th>
        </tr>
      </thead>
      <tbody>
        {files.map((f, i) => (
          <tr key={i} className={rowColor[f.kind]}>
            <td className={cell}>
              <span className="flex items-center leading-5">
                <span className="flex w-5 shrink-0 justify-center pl-1">{f.kind !== "file" && <Chevron />}</span>
                <span
                  className={clsx(
                    "flex h-[22px] flex-1 items-center gap-1 overflow-hidden border pl-1",
                    i === 0 ? "border-[#2b5f97]" : "border-transparent",
                  )}
                >
                  <span className="flex w-[18px] shrink-0 justify-center">{f.icon}</span>
                  {f.name}
                </span>
              </span>
            </td>
            <td className={clsx(cell, "pr-[7px] text-right")}>{f.size}</td>
            <td className={clsx(cell, "pl-[6px]")}>{f.kind !== "file" && "<dir>"}</td>
            <td className="h-[23px] border-b border-dashed border-[#2c2c2c] p-0 pr-[7px] text-right">
              {f.day && <span className="pr-2">{f.day}</span>}
              {f.time}
            </td>
          </tr>
        ))}
      </tbody>
    </table>
  );
}

function FilterBar() {
  return (
    <div className="flex h-[33px] items-center border-t border-[#434343] bg-[#161616] pl-[9px] whitespace-nowrap text-[#9b9b9b]">
      <span className="w-[27px]">
        <Ico w={14} h={16}>
          <path d="M0 0h14v2.500L9 8v8H6V8L0 2.500z" fill="#4c84c4" />
          <path d="M1 1.500h12" stroke="#b8d4f2" />
          <path d="M7.500 8v8" stroke="#ddd" strokeWidth="2" />
        </Ico>
      </span>
      <span className="w-[22px]"><PageIcon /></span>
      <span className="w-[23px]">14</span>
      <span className="w-[23px]"><FolderIcon /></span>
      <span className="w-[16px]">8</span>
      <span className="w-[22px]"><PageIcon dim /></span>
      <span className="w-[15px] text-[#6f6f6f]">0</span>
      <span className="w-[22px]"><FolderIcon dim /></span>
      <span className="w-[22px] text-[#6f6f6f]">0</span>
      <button type="button" aria-label="Einstellungen" className="flex h-7 w-[49px] items-center justify-between border border-[#5e5e5e] bg-[#333] pr-[3px] pl-[5px]">
        <Ico w={16} h={16}>
          <circle cx="8" cy="8" r="6.400" stroke="#ddd" strokeWidth="2.500" strokeDasharray="2.500 2.500" />
          <circle cx="8" cy="8" r="4" stroke="#ddd" strokeWidth="2.600" />
        </Ico>
        <Tri />
      </button>
      <button type="button" aria-label="Format" className="ml-[5px] flex h-7 w-[49px] items-center justify-between border border-[#5e5e5e] bg-[#333] pr-[3px] pl-[6px]">
        <Ico w={14} h={17}>
          <path d="M.5.500h9.500l3.500 3.500v12.500H.5z" fill="#fff" />
          <path d="M3 5.500h3.500v4H3z" fill="#2e75d0" />
          <path d="M7.500 5.500H11v4H7.500z" fill="#d6452c" />
          <path d="M3 10.500h3.500v4H3z" fill="#e0703c" />
          <path d="M7.500 10.500H11v4H7.500z" fill="#3f9c5e" />
        </Ico>
        <Tri />
      </button>
      <div className="ml-[5px] flex h-7 w-[156px] items-center border border-[#5e5e5e] bg-black pr-1 pl-[7px]">
        <Ico w={12} h={12}><path d="M4 .5h3.500V4H4zM.5 7.500H4V11H.5zM7.500 7.500H11V11H7.500z" stroke="#aaa" /></Ico>
        <input
          type="text"
          aria-label="Filter"
          placeholder="Filter eingeben"
          className="ml-[7px] min-w-0 flex-1 bg-transparent italic outline-none placeholder:text-[#6f6f6f]"
        />
        <Ico w={10} h={6}><path d="M.5.500L5 5.200 9.500.5" stroke="#888" /></Ico>
      </div>
      <IconBtn label="Filter löschen" w="w-[30px]"><Ico w={8} h={8}><path d="M0 0l8 8M8 0L0 8" stroke="#777" strokeWidth="1.800" /></Ico></IconBtn>
      <label className="ml-[15px] flex items-center gap-[5px]">
        <input type="checkbox" className="size-4 appearance-none border border-[#777] bg-[#222]" />
        Alles anzeigen
      </label>
    </div>
  );
}

function StatusBar() {
  return (
    <footer className="flex h-[29px] items-center border-t border-[#3a3a3a] bg-[#1c1c1c] pr-1 pl-1 whitespace-nowrap text-[#9b9b9b]">
      <span className="w-[23px]"><FolderIcon /></span>
      <span className="w-[32px]">0 / 8</span>
      <Sep />
      <span className="w-[21px]"><PageIcon /></span>
      <span className="w-[48px]">0 / 14</span>
      <Sep />
      <span className="w-[112px] font-bold text-[#ff0000]">5 ausgeblendet</span>
      <Sep />
      <span>0 Bytes / 335 GB</span>
      <div className="ml-auto flex items-center self-stretch">
        <Sep />
        <span className="w-[24px] pl-0.5">
          <Ico w={18} h={20}>
            <path d="M9 9V4a3 3 0 0 1 6 0v4" stroke="#d8d8d8" strokeWidth="2.200" />
            <rect x="0" y="8" width="13" height="11" rx="1" fill="#e0c07c" />
            <path d="M2 14h9v3H2z" fill="#c9923c" />
          </Ico>
        </span>
        <Sep />
        <span className="w-[55px]">17,6 GB</span>
        <span className="h-[18px] w-[62px] border border-[#5a4a4a] bg-[#c02020]" />
      </div>
    </footer>
  );
}

function Lister() {
  const nav = "#b9c4ce";
  return (
    <main className="flex min-w-0 flex-1 flex-col border-t border-l border-[#434343] bg-black">
      <div className="flex h-[31px] border-b border-[#434343] bg-[#202020]">
        <button type="button" className="flex w-[52px] items-center gap-1 rounded-t bg-[#386691] pl-[6px] text-[#e4e4e4]">
          <DriveIcon />
          D:
        </button>
        <button type="button" aria-label="Neuer Tab" className="flex w-[27px] items-center justify-center rounded-tr border-r border-[#434343] bg-black pr-1">
          <Ico w={9} h={9}><path d="M0 4.500h9M4.500 0v9" stroke="#ddd" strokeWidth="1.700" /></Ico>
        </button>
      </div>

      <div className="flex h-8 items-center bg-[#386691] pl-[2px]">
        <IconBtn label="Zurück" w="w-6"><Ico w={14} h={14}><path d="M13 7H2M7 1.500L1.500 7 7 12.500" stroke={nav} strokeWidth="1.900" /></Ico></IconBtn>
        <IconBtn label="Vorwärts" w="w-6"><Ico w={14} h={14} dim><path d="M1 7h11M7 1.500L12.500 7 7 12.500" stroke={nav} strokeWidth="1.900" /></Ico></IconBtn>
        <IconBtn label="Aufwärts" w="w-6"><Ico w={14} h={14}><path d="M7 13V2M1.500 7L7 1.500 12.500 7" stroke={nav} strokeWidth="1.900" /></Ico></IconBtn>
        <IconBtn label="Neu laden" w="w-6"><Ico w={14} h={14}><path d="M12 9.500A5.300 5.300 0 1 1 10.500 3L12 4.500M12.500 0v5.500H7.500" stroke={nav} strokeWidth="2.200" /></Ico></IconBtn>
        <IconBtn label="Start" w="w-6"><Ico w={14} h={14}><path d="M1.500 13V6L7 1.200 12.500 6v7M4.500 13V9a2.500 2.500 0 0 1 5 0v4" stroke={nav} strokeWidth="1.800" /></Ico></IconBtn>
        <button type="button" aria-label="Favoriten" className="relative flex h-full w-[26px] items-center pl-[5px]">
          <Ico w={15} h={14}><path d="M7.500 1.500l1.800 3.800 4.200.5-3 2.900.8 4.200-3.800-2-3.800 2 .8-4.200-3-2.900 4.200-.5z" stroke={nav} strokeWidth="1.700" /></Ico>
          <svg width="9" height="6" className="absolute right-0.5 bottom-0.5" aria-hidden="true"><path d="M0 0h9L4.500 6z" fill="#fff" /></svg>
        </button>
        <div className="flex h-7 flex-1 items-center border border-[#2f5478] bg-[#284561] pr-1 pl-[2px] text-[#c8c8c8]">
          <span className="w-[28px]"><DriveIcon /></span>
          <Chevron />
          <span className="w-[27px] pl-[11px]">D:</span>
          <span className="pl-[8px]"><Chevron /></span>
          <span className="ml-[11px] flex-1 text-[#74808c] italic">Macrium Reflect</span>
          <svg width="10" height="8" aria-hidden="true"><path d="M0 0h10L5 8z" fill="#3797ff" /></svg>
        </div>
        <IconBtn label="Weiter" w="w-[31px]"><Ico w={14} h={13}><path d="M0 0h3.500v13H0zM5.500 0H8l6 6.500L8 13H5.500z" fill={nav} /></Ico></IconBtn>
      </div>

      <div className="flex h-[29px] items-center overflow-hidden border-b border-[#434343] bg-[#386691] pl-[7px] whitespace-nowrap text-[#e8e8e8]">
        <Tool label="Inhalt markierter Ordner nach hier" w="w-[230px]" />
        <button type="button" disabled className="flex w-[239px] shrink-0 items-center text-[#8fa9c3]">
          <span className="w-[23px]">
            <Ico h={20}>
              <path d="M7 1h8l3 3v10H7z" fill="#88a9c8" />
              <path d="M0 8h5l1 2h7v9H0z" fill="#a3ab8c" />
              <path d="M4 16l6-6M10 15v-5H5" stroke="#4c9a52" strokeWidth="2.500" />
            </Ico>
          </span>
          In Ordner verschieben/kopieren
        </button>
        <IconBtn label="Ordner markieren" w="w-5"><CheckFolderIcon /></IconBtn>
        <span className="w-1" />
        <Tool label="Test Ordner" w="w-[122px]" icon={<NewFolderIcon />} />
        <Tool label="View Items" w="w-[93px]" />
        <Tool
          label="Dateien/Ordner ausblenden"
          w="w-[243px]"
          icon={
            <Ico w={20} h={20}>
              <path d="M7 16.500H2.500a2 2 0 0 1-2-2v-12a2 2 0 0 1 2-2H12a2 2 0 0 1 2 2V8" stroke={W} strokeWidth="1.2" />
              <Plus x={13.5} y={14} />
            </Ico>
          }
        />
        <Tool label="MultiPar" w="w-[85px]" />
        <button type="button" className="h-6 w-[54px] shrink-0 border border-[#5fae14] bg-[#468458]">toggle</button>
        <span className="w-[5px]" />
        <Tool label="Zur Merkliste" w="w-[110px]" />
      </div>

      <div className="min-h-0 flex-1 overflow-hidden">
        <FileTable />
      </div>
      <FilterBar />
      <StatusBar />
    </main>
  );
}

/* ---------- dialogs ---------- */

function PropertiesDialog() {
  const tab = "h-[21px] border border-r-0 border-b-0 border-[#6b6b6b] bg-[#161616]";
  return (
    <section
      role="dialog"
      aria-label="Eigenschaften von Bilder"
      className="absolute top-[315px] left-[694px] w-[480px] border border-[#3c3c3c] bg-[#202020] pb-[9px] whitespace-nowrap text-[#9b9b9b] shadow-[0_6px_20px_rgba(0,0,0,0.6)]"
    >
      <div className="flex h-9 items-center pl-[10px] text-[#7c7c7c]">
        <span className="w-[25px]"><FolderIcon /></span>
        <span className="flex-1">Eigenschaften von Bilder</span>
        <IconBtn label="Schließen" w="w-[41px]"><Ico w={13} h={13}><path d="M.5.500l12 12M12.500.5l-12 12" stroke="#8a8a8a" /></Ico></IconBtn>
      </div>
      <div className="font-['Liberation_Sans',Arial,sans-serif] text-[13px] leading-4">
        <div role="tablist" className="mt-[9px] flex items-end pl-[10px]">
          <button type="button" role="tab" className={clsx(tab, "w-[71px]")}>Allgemein</button>
          <button type="button" role="tab" className={clsx(tab, "w-[66px]")}>Freigabe</button>
          <button type="button" role="tab" aria-selected="true" className="relative -mb-px h-6 w-[75px] border border-b-0 border-[#6b6b6b] bg-[#272727] pb-1 text-[#e4e4e4]">Sicherheit</button>
          <button type="button" role="tab" className={clsx(tab, "w-[132px] border-l-0")}>Vorgängerversionen</button>
          <button type="button" role="tab" className={clsx(tab, "w-[72px] border-r-[1px]")}>Anpassen</button>
        </div>
        <div className="mr-[10px] ml-2 border border-[#6b6b6b] bg-[#272727] px-[17px] pt-4 pb-[18px]">
          <p className="flex">
            <span className="w-[106px]">Objektname:</span>
            D:\Bilder
          </p>
          <p className="mt-5">Gruppen- oder Benutzernamen:</p>
          <div className="mt-[19px] border border-[#6b6b6b] bg-black pt-px">
            <ul>
              {["Jeder", "Authentifizierte Benutzer", "SYSTEM", "Administratoren (HARDKORN-LP)"].map((u, i) => (
                <li key={u} className="flex h-[21px] items-center overflow-hidden pl-[5px]">
                  <span className="flex w-5 shrink-0"><UsersIcon dim={i === 0} /></span>
                  <span className={clsx("flex-1 py-[3px] pl-0.5", i === 0 && "bg-[#222]")}>{u}</span>
                </li>
              ))}
            </ul>
            <div className="m-px flex h-[19px] bg-[#222]">
              <IconBtn label="Nach links" w="w-[21px]"><Ico w={6} h={9}><path d="M5 .5L1 4.500l4 4" stroke="#888" strokeWidth="1.700" /></Ico></IconBtn>
              <span className="flex-1 bg-[#414141]" />
            </div>
          </div>
          <p className="mt-2">
            Klicken Sie auf "Bearbeiten",
            <br />
            Berechtigungen zu ändern.
          </p>
          <p className="mt-3">Berechtigungen für "Jeder"</p>
          <ul className="mt-[10px] h-[143px] overflow-hidden border border-[#6b6b6b] bg-black pt-[3px] pl-[14px] leading-[22px]">
            {["Vollzugriff", "Ändern", "Lesen, Ausführen", "Ordnerinhalt anzeigen", "Lesen", "Schreiben"].map((p) => (
              <li key={p}>{p}</li>
            ))}
            <li className="leading-[18px]">Spezielle Berechtig</li>
          </ul>
          <p className="mt-1">
            Klicken Sie auf "Erweitert", um
            <br />
            Berechtigungen anzuzeigen.
          </p>
        </div>
        <button type="button" aria-label="OK" className="mt-[11px] ml-[155px] block h-[26px] w-[90px] border border-[#5e5e5e] bg-[#333]" />
      </div>
    </section>
  );
}

const principals = [
  "Authentifizierte Benutzer",
  "SYSTEM",
  "Administratoren (HARDKORN-LP\\...",
  "Benutzer (HARDKORN-LP\\Benutzer)",
  "Jeder",
];

function DialogButton({ children, w, disabled, primary }: { children: ReactNode; w: string; disabled?: boolean; primary?: boolean }) {
  return (
    <button
      type="button"
      disabled={disabled}
      className={clsx(
        "h-7",
        w,
        disabled && "border border-[#3c3c3c] bg-[#2a2a2a] text-[#4c4c4c]",
        primary && "border-2 border-[#2b79b5] bg-[#383838] text-[#c4c4c4]",
        !disabled && !primary && "border border-[#5e5e5e] bg-[#383838] text-[#c4c4c4]",
      )}
    >
      {children}
    </button>
  );
}

function SecurityDialog() {
  const head = "h-[26px] border-r border-b border-[#434343] bg-[#202020] p-0 pl-[6px] text-left font-normal";
  return (
    <section
      role="dialog"
      aria-label="Erweiterte Sicherheitseinstellungen"
      className="absolute top-[452px] left-[888px] w-[1022px] border border-[#3c3c3c] bg-[#202020] whitespace-nowrap text-[#9b9b9b] shadow-[0_6px_24px_rgba(0,0,0,0.8)]"
    >
      <div className="flex h-9 items-center pl-[10px] text-[#7c7c7c]">
        <span className="w-[25px]"><FolderIcon /></span>
        <span className="flex-1">Erweiterte Sicherheitseinstellungen für "Bilder"</span>
        <IconBtn label="Minimieren" w="w-[58px]"><Ico w={12} h={12}><path d="M0 5.500h12" stroke="#333" /></Ico></IconBtn>
        <IconBtn label="Maximieren" w="w-[58px]"><Ico w={12} h={12}><rect x=".5" y=".5" width="11" height="11" rx="1" stroke="#8a8a8a" /></Ico></IconBtn>
        <IconBtn label="Schließen" w="w-[60px]"><Ico w={12} h={12}><path d="M0 0l12 12M12 0L0 12" stroke="#8a8a8a" /></Ico></IconBtn>
      </div>

      <div className="mx-[14px] mt-[15px] border border-[#0a64c8] bg-black pt-[13px] pb-[14px]">
        <p className="flex h-9 items-center pl-[13px]">
          <span className="w-[142px]">Name:</span>
          D:\Bilder
        </p>
        <p className="flex h-9 items-center pl-[13px]">
          <span className="w-[142px]">Besitzer:</span>
          <span className="w-[49px]">Jeder</span>
          <a href="#aendern" className="flex items-center gap-1 text-[#0a6cd6]">
            <Ico>
              <path d="M9 0v9H0V2c4 0 6.500-.7 9-2z" fill="#0c8de0" />
              <path d="M9 0v9h9V2c-4 0-6.500-.7-9-2z" fill="#ffd400" />
              <path d="M0 9h9v9C4 16 .5 13 0 9z" fill="#ffd400" />
              <path d="M18 9H9v9c5-2 8.500-5 9-9z" fill="#0c7cd4" />
            </Ico>
            Ändern
          </a>
        </p>
        <div role="tablist" className="mt-[10px] flex h-7 border-b border-[#0a64c8]">
          <button type="button" role="tab" aria-selected="true" className="relative -mb-px w-[124px] border border-b-0 border-[#4c4c4c] bg-[#282828]">Berechtigungen</button>
          <button type="button" role="tab" className="w-[124px] border-t border-r border-[#5e5e5e] bg-[#161616]">Überwachung</button>
          <button type="button" role="tab" className="w-[125px] border-t border-r border-[#5e5e5e] bg-[#161616]">Effektiver Zugriff</button>
        </div>
        <p className="mt-[21px] pl-[13px] leading-5">
          Doppelklicken Sie auf einen Berechtigungseintrag, um zusätzliche Informationen zu erhalten. Wählen Sie zum Ändern eines Berechtigungseintrags
          <br />
          den Eintrag aus, und klicken Sie auf "Bearbeiten" (soweit vorhanden).
        </p>
        <p className="mt-[14px] pl-[13px] leading-5">Berechtigungseinträge:</p>
        <div className="mt-2 mr-[14px] ml-[11px] h-[176px] border border-[#6b6b6b] pr-px">
          <table className="w-full table-fixed border-separate border-spacing-0">
            <colgroup>
              <col className="w-[269px]" />
              <col className="w-[67px]" />
              <col className="w-[192px]" />
              <col className="w-[192px]" />
              <col />
            </colgroup>
            <thead>
              <tr>
                <th className={head}>Prinzipal</th>
                <th className={head}>Typ</th>
                <th className={head}>Zugriff</th>
                <th className={head}>Geerbt von</th>
                <th className={head}>Anwenden auf</th>
              </tr>
            </thead>
            <tbody>
              {principals.map((p) => (
                <tr key={p} className="h-6">
                  <td className="p-0 pl-[5px]">
                    <span className="flex items-center gap-[3px]">
                      <UsersIcon />
                      {p}
                    </span>
                  </td>
                  <td className="p-0 pl-[6px]">Zulass...</td>
                  <td className="p-0 pl-[6px]">Vollzugriff</td>
                  <td className="p-0 pl-[6px]">D:\</td>
                  <td className="p-0 pl-[6px]">Diesen Ordner, Unterordner und ...</td>
                </tr>
              ))}
            </tbody>
          </table>
        </div>
        <div className="mt-[15px] flex gap-[11px] pl-3">
          <DialogButton w="w-[117px]">Hinzufügen</DialogButton>
          <DialogButton w="w-[117px]" disabled>Entfernen</DialogButton>
          <DialogButton w="w-[117px]" disabled>Anzeigen</DialogButton>
        </div>
        <div className="mt-[15px] pl-3">
          <DialogButton w="w-[194px]">Vererbung deaktivieren</DialogButton>
        </div>
        <label className="mt-4 flex h-5 items-center gap-1 pl-[11px]">
          <input type="checkbox" className="size-4 appearance-none border border-[#9b9b9b] bg-[#333]" />
          Alle Berechtigungseinträge für untergeordnete Objekte durch vererbbare Berechtigungseinträge von diesem Objekt ersetzen
        </label>
      </div>

      <div className="flex justify-end gap-[11px] px-[15px] pt-[10px] pb-[9px]">
        <DialogButton w="w-[125px]" primary>OK</DialogButton>
        <DialogButton w="w-[125px]">Abbrechen</DialogButton>
        <DialogButton w="w-[126px]" disabled>Übernehmen</DialogButton>
      </div>
    </section>
  );
}

function App() {
  return (
    <div className="relative flex h-screen flex-col overflow-hidden bg-[#202020] font-['Open_Sans','Noto_Sans',sans-serif] text-sm">
      <svg width="0" height="0" className="absolute" aria-hidden="true">
        <defs>
          <linearGradient id="folder" x1="0" y1="0" x2="1" y2="1">
            <stop offset="0" stopColor="#ffe394" />
            <stop offset="1" stopColor="#ffc534" />
          </linearGradient>
          <linearGradient id="screen" x1="0" y1="0" x2="1" y2="1">
            <stop offset="0" stopColor="#37c8e6" />
            <stop offset="1" stopColor="#0a6cc0" />
          </linearGradient>
          <linearGradient id="sheet" x1="0" y1="0" x2="1" y2="1">
            <stop offset="0" stopColor="#a8dcff" />
            <stop offset="1" stopColor="#4da6f0" />
          </linearGradient>
          <linearGradient id="grass" x1="0" y1="0" x2="0" y2="1">
            <stop offset="0" stopColor="#d4efb4" />
            <stop offset="1" stopColor="#4cae1c" />
          </linearGradient>
          <linearGradient id="fox" x1="1" y1="0" x2="0" y2="1">
            <stop offset="0" stopColor="#ffe03a" />
            <stop offset=".5" stopColor="#ff8a1e" />
            <stop offset="1" stopColor="#ee2a55" />
          </linearGradient>
        </defs>
      </svg>
      <TopBars />
      <div className="flex min-h-0 flex-1">
        <TreePanel />
        <LauncherBar />
        <Lister />
      </div>
      <PropertiesDialog />
      <SecurityDialog />
    </div>
  );
}

export default App;
